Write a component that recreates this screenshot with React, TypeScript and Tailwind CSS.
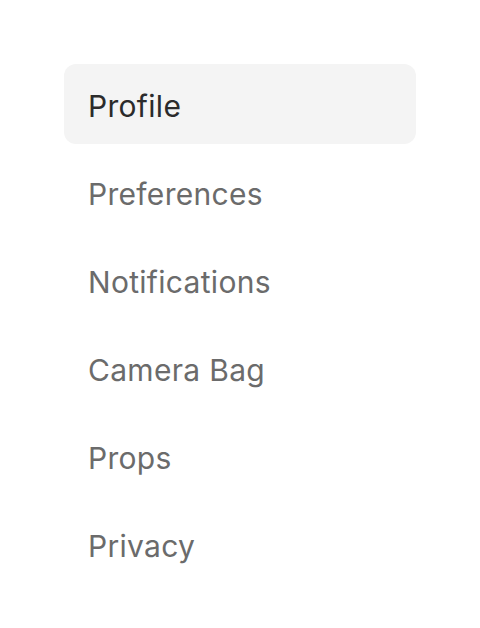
const items = ['Profile', 'Preferences', 'Notifications', 'Camera Bag', 'Props', 'Privacy'];

export default function App() {
  return (
    <div className="min-h-[628px] bg-white px-16 py-16" style={{ fontFamily: 'Inter, "Liberation Sans", sans-serif' }}>
      <nav className="flex w-[352px] flex-col gap-2">
        {items.map((item, i) => (
          <a
            key={item}
            href="#"
            className={`flex h-20 items-center rounded-xl px-6 pt-1 text-[30px] tracking-[0.01em] ${
              i === 0 ? 'bg-[#f4f4f4] text-[#2b2b2b]' : 'text-[#6b6b6b]'
            }`}
          >
            {item}
          </a>
        ))}
      </nav>
    </div>
  );
}
